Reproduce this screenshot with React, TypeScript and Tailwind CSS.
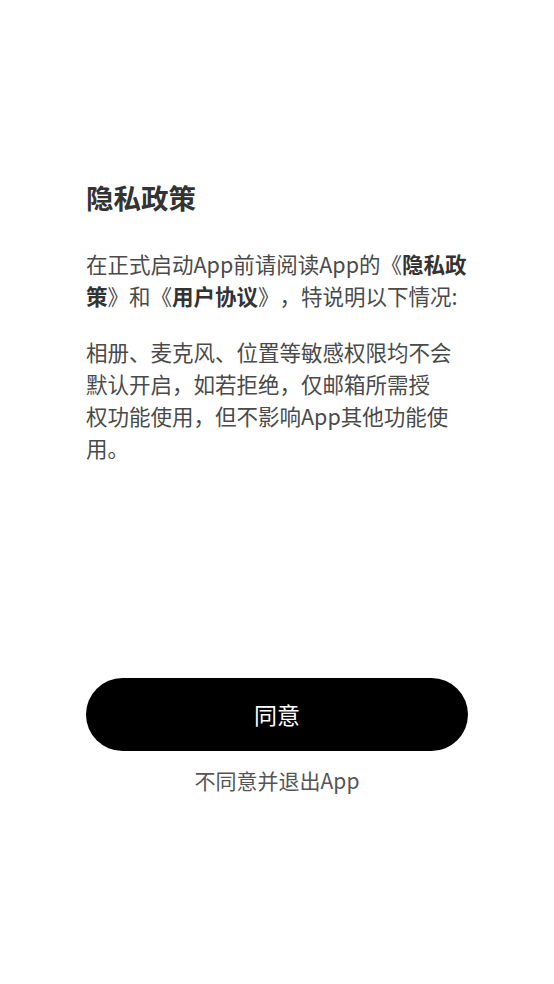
import React from "react";

const font = { fontFamily: '"Noto Sans CJK SC", "Noto Sans", sans-serif' };

export default function App() {
  return (
    <div
      className="flex h-[984px] w-full flex-col bg-white px-[86px] pt-[178px] [text-spacing-trim:space-all]"
      style={font}
    >
      <h1 className="text-[27.5px] font-bold leading-[38px] text-[#333333]">隐私政策</h1>

      <p className="mt-[32px] w-[388px] text-[21.5px] leading-[32px] text-[#4a4a4a]">
        在正式启动App前请阅读App的《<span className="font-bold text-[#333333]">隐私政策</span>》和《<span className="font-bold text-[#333333]">用户协议</span>》，特说明以下情况:
      </p>

      <p className="mt-[24px] w-[388px] text-[21.5px] leading-[32px] text-[#4a4a4a]">
        相册、麦克风、位置等敏感权限均不会
        <br />
        默认开启，如若拒绝，仅邮箱所需授
        <br />
        权功能使用，但不影响App其他功能使用。
      </p>

      <button
        type="button"
        className="mt-[214px] flex h-[73px] w-[382px] items-center justify-center rounded-full bg-black text-[23px] text-white"
      >
        同意
      </button>

      <button
        type="button"
        className="mt-[13px] w-[382px] text-center text-[21px] leading-[32px] text-[#555555]"
      >
        不同意并退出App
      </button>
    </div>
  );
}
